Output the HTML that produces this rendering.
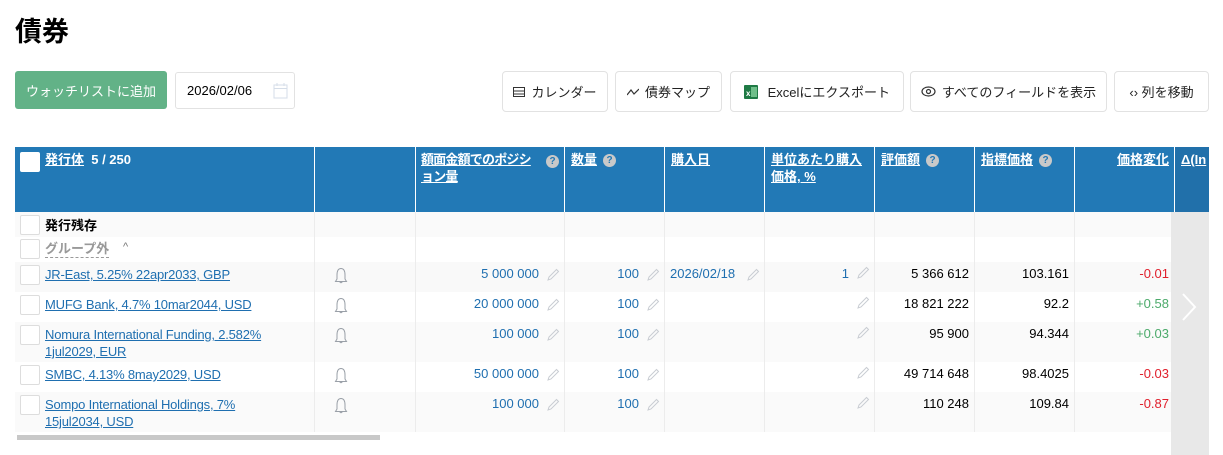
<!DOCTYPE html>
<html><head><meta charset="utf-8">
<style>
*{box-sizing:border-box;margin:0;padding:0}
body{width:1223px;height:455px;overflow:hidden;background:#fff;font-family:"Liberation Sans","Noto Sans CJK JP",sans-serif;font-size:13px;color:#000;position:relative}
.a{position:absolute}
.btn{position:absolute;top:71px;height:41px;border:1px solid #e2e2e2;border-radius:4px;background:#fff;font-size:13px;display:flex;align-items:center;justify-content:center;gap:6px;color:#222}
.hd{position:absolute;top:147px;height:65px;background:#2279b6;color:#fff;font-weight:bold;font-size:13px;line-height:17px;padding:4px 6px}
.hd u{text-decoration:underline}
.q{display:inline-block;width:13px;height:13px;border-radius:50%;background:#c9c9c9;color:#2279b6;font-size:10px;text-align:center;line-height:13px;vertical-align:middle;margin-left:6px}
.vl{position:absolute;width:1px;background:#ececec;top:212px;height:220px}
.hv{position:absolute;width:1px;background:#fff;top:147px;height:65px}
.row{position:absolute;left:15px;width:1156px}
.cb{position:absolute;left:20px;width:20px;height:20px;border:1px solid #ddd;background:#fff;border-radius:2px}
.lnk{position:absolute;left:45px;color:#1f6fb0;text-decoration:underline;font-size:13px;line-height:17px;letter-spacing:-0.2px}
.n{position:absolute;text-align:right;font-size:13px;line-height:17px}
.b{color:#1f6fb0}
.pen{position:absolute;width:13px;height:13px}
.r{color:#e0202d}.g{color:#4caa6b}
</style></head><body>
<div class="a" style="left:15px;top:12px;font-size:27px;font-weight:bold;line-height:40px">債券</div>
<div class="a" style="left:15px;top:71px;width:152px;height:38px;background:#62b287;border-radius:3px;color:#fff;font-size:13px;display:flex;align-items:center;justify-content:center">ウォッチリストに追加</div>
<div class="a" style="left:175px;top:72px;width:120px;height:37px;border:1px solid #e2e2e2;border-radius:3px;font-size:13px;padding-left:11px;line-height:35px">2026/02/06
<svg class="a" style="left:97px;top:10px" width="15" height="16" viewBox="0 0 15 16"><rect x="1" y="2" width="13" height="13" fill="none" stroke="#d5dde8"/><line x1="1" y1="5.5" x2="14" y2="5.5" stroke="#d5dde8"/><line x1="4" y1="0" x2="4" y2="3" stroke="#d5dde8"/><line x1="11" y1="0" x2="11" y2="3" stroke="#d5dde8"/></svg></div>

<div class="btn" style="left:502px;width:106px"><svg width="12" height="10"><rect x=".5" y=".5" width="11" height="9" fill="none" stroke="#333"/><line x1="0" y1="4" x2="12" y2="4" stroke="#333"/><line x1="0" y1="7" x2="12" y2="7" stroke="#333"/></svg>カレンダー</div>
<div class="btn" style="left:615px;width:107px"><svg width="12" height="8"><path d="M0 7 L4 2 L7 6 L12 1" fill="none" stroke="#333" stroke-width="1.2"/></svg>債券マップ</div>
<div class="btn" style="left:730px;width:174px"><svg width="14" height="14"><rect width="14" height="14" rx="1" fill="#1f7a45"/><rect x="7" y="2" width="6" height="10" fill="#6fbf8a"/><text x="2" y="11" font-size="8" fill="#fff" font-family="Liberation Sans" font-weight="bold">x</text></svg>&nbsp;Excelにエクスポート</div>
<div class="btn" style="left:910px;width:197px"><svg width="15" height="11"><ellipse cx="7.5" cy="5.5" rx="6.5" ry="4.5" fill="none" stroke="#333" stroke-width="1.2"/><circle cx="7.5" cy="5.5" r="2" fill="none" stroke="#333" stroke-width="1.2"/></svg>すべてのフィールドを表示</div>
<div class="btn" style="left:1114px;width:95px">‹› 列を移動</div>

<div class="hd" style="left:15px;width:300px;padding-left:30px"><span class="a" style="left:5px;top:5px;width:20px;height:20px;background:#fff;border-radius:2px"></span><u>発行体</u>&nbsp; 5 / 250</div>
<div class="hd" style="left:315px;width:100px"></div>
<div class="hd" style="left:415px;width:150px;letter-spacing:-0.8px"><u>額面金額でのポジシ<br>ョン量</u><span class="q a" style="left:131px;top:8px;margin:0;letter-spacing:0">?</span></div>
<div class="hd" style="left:565px;width:100px"><u>数量</u><span class="q">?</span></div>
<div class="hd" style="left:665px;width:100px"><u>購入日</u></div>
<div class="hd" style="left:765px;width:110px"><u>単位あたり購入<br>価格, %</u></div>
<div class="hd" style="left:875px;width:100px"><u>評価額</u><span class="q">?</span></div>
<div class="hd" style="left:975px;width:100px"><u>指標価格</u><span class="q">?</span></div>
<div class="hd" style="left:1075px;width:100px;text-align:right"><u>価格変化</u></div>
<div class="hd" style="left:1175px;width:34px;background:#2170aa;overflow:hidden;white-space:nowrap"><u>Δ(In</u></div>
<div class="hv" style="left:314px"></div><div class="hv" style="left:415px"></div><div class="hv" style="left:564px"></div><div class="hv" style="left:664px"></div><div class="hv" style="left:764px"></div><div class="hv" style="left:874px"></div><div class="hv" style="left:974px"></div><div class="hv" style="left:1074px"></div><div class="hv" style="left:1174px"></div>

<div class="row" style="top:212px;height:25px;background:#fafafa"></div>
<div class="row" style="top:262px;height:30px;background:#f9f9f9"></div>
<div class="row" style="top:322px;height:40px;background:#fafafa"></div>
<div class="row" style="top:392px;height:40px;background:#fafafa"></div>
<div class="vl" style="left:314px"></div><div class="vl" style="left:415px"></div><div class="vl" style="left:564px"></div><div class="vl" style="left:664px"></div><div class="vl" style="left:764px"></div><div class="vl" style="left:874px"></div><div class="vl" style="left:974px"></div><div class="vl" style="left:1074px"></div>

<div class="cb" style="top:215px"></div><div class="a" style="left:45px;top:217px;font-weight:bold;line-height:17px">発行残存</div>
<div class="cb" style="top:239px"></div><div class="a" style="left:45px;top:240px;color:#999;font-weight:bold;border-bottom:1px dashed #999;line-height:17px">グループ外</div><div class="a" style="left:123px;top:241px;color:#777;font-size:11px">^</div>

<div class="cb" style="top:265px"></div><a class="lnk" style="top:266px">JR-East, 5.25% 22apr2033, GBP</a>
<div class="cb" style="top:295px"></div><a class="lnk" style="top:296px">MUFG Bank, 4.7% 10mar2044, USD</a>
<div class="cb" style="top:325px"></div><a class="lnk" style="top:326px">Nomura International Funding, 2.582%<br>1jul2029, EUR</a>
<div class="cb" style="top:365px"></div><a class="lnk" style="top:366px">SMBC, 4.13% 8may2029, USD</a>
<div class="cb" style="top:395px"></div><a class="lnk" style="top:396px">Sompo International Holdings, 7%<br>15jul2034, USD</a>

<svg width="0" height="0" style="position:absolute"><defs><symbol id="bell" viewBox="0 0 14 18"><path d="M7 1.5 C3.5 1.5 3 5 3 8 L3 12 L1.5 14.5 L12.5 14.5 L11 12 L11 8 C11 5 10.5 1.5 7 1.5 Z M5.5 14.5 Q7 17 8.5 14.5" fill="none" stroke="#9aa0a8" stroke-width="1"/></symbol><symbol id="pen" viewBox="0 0 13 13"><path d="M1 12 L2 9 L9.5 1.5 L11.5 3.5 L4 11 Z" fill="none" stroke="#c8ccd2" stroke-width="1"/></symbol></defs></svg>
<svg class="a" style="left:334px;top:267px" width="14" height="18"><use href="#bell"/></svg>
<svg class="a" style="left:334px;top:297px" width="14" height="18"><use href="#bell"/></svg>
<svg class="a" style="left:334px;top:327px" width="14" height="18"><use href="#bell"/></svg>
<svg class="a" style="left:334px;top:367px" width="14" height="18"><use href="#bell"/></svg>
<svg class="a" style="left:334px;top:397px" width="14" height="18"><use href="#bell"/></svg>

<div class="n b" style="right:684px;top:265px">5 000 000</div>
<div class="n b" style="right:684px;top:295px">20 000 000</div>
<div class="n b" style="right:684px;top:325px">100 000</div>
<div class="n b" style="right:684px;top:365px">50 000 000</div>
<div class="n b" style="right:684px;top:395px">100 000</div>
<div class="n b" style="right:584px;top:265px">100</div>
<div class="n b" style="right:584px;top:295px">100</div>
<div class="n b" style="right:584px;top:325px">100</div>
<div class="n b" style="right:584px;top:365px">100</div>
<div class="n b" style="right:584px;top:395px">100</div>
<div class="a b" style="left:670px;top:265px;line-height:17px">2026/02/18</div>
<div class="n b" style="right:374px;top:265px">1</div>
<svg class="pen" style="left:547px;top:268px"><use href="#pen"/></svg><svg class="pen" style="left:547px;top:298px"><use href="#pen"/></svg><svg class="pen" style="left:547px;top:328px"><use href="#pen"/></svg><svg class="pen" style="left:547px;top:368px"><use href="#pen"/></svg><svg class="pen" style="left:547px;top:398px"><use href="#pen"/></svg>
<svg class="pen" style="left:647px;top:268px"><use href="#pen"/></svg><svg class="pen" style="left:647px;top:298px"><use href="#pen"/></svg><svg class="pen" style="left:647px;top:328px"><use href="#pen"/></svg><svg class="pen" style="left:647px;top:368px"><use href="#pen"/></svg><svg class="pen" style="left:647px;top:398px"><use href="#pen"/></svg>
<svg class="pen" style="left:747px;top:268px"><use href="#pen"/></svg>
<svg class="pen" style="left:857px;top:266px"><use href="#pen"/></svg><svg class="pen" style="left:857px;top:296px"><use href="#pen"/></svg><svg class="pen" style="left:857px;top:326px"><use href="#pen"/></svg><svg class="pen" style="left:857px;top:366px"><use href="#pen"/></svg><svg class="pen" style="left:857px;top:396px"><use href="#pen"/></svg>
<div class="n" style="right:254px;top:265px">5 366 612</div>
<div class="n" style="right:254px;top:295px">18 821 222</div>
<div class="n" style="right:254px;top:325px">95 900</div>
<div class="n" style="right:254px;top:365px">49 714 648</div>
<div class="n" style="right:254px;top:395px">110 248</div>
<div class="n" style="right:154px;top:265px">103.161</div>
<div class="n" style="right:154px;top:295px">92.2</div>
<div class="n" style="right:154px;top:325px">94.344</div>
<div class="n" style="right:154px;top:365px">98.4025</div>
<div class="n" style="right:154px;top:395px">109.84</div>
<div class="n r" style="right:54px;top:265px">-0.01</div>
<div class="n g" style="right:54px;top:295px">+0.58</div>
<div class="n g" style="right:54px;top:325px">+0.03</div>
<div class="n r" style="right:54px;top:365px">-0.03</div>
<div class="n r" style="right:54px;top:395px">-0.87</div>

<div class="a" style="left:1171px;top:212px;width:38px;height:243px;background:#e8e8e8"></div>
<svg class="a" style="left:1180px;top:292px" width="18" height="30"><path d="M3 2 L15 15 L3 28" fill="none" stroke="#fff" stroke-width="2"/></svg>
<div class="a" style="left:17px;top:435px;width:363px;height:5px;background:#c8c8c8"></div>
</body></html>
